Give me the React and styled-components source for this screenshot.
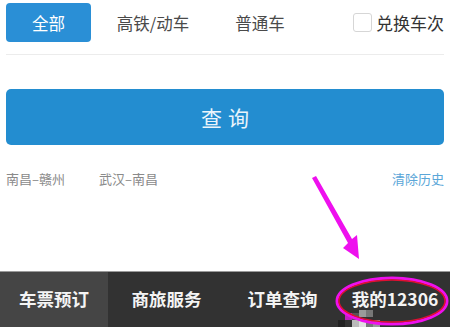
import React, { useState } from "react";
import styled, { createGlobalStyle } from "styled-components";

const GlobalStyle = createGlobalStyle`
  html, body {
    margin: 0;
    padding: 0;
    background: #ffffff;
  }
  body {
    font-family: "Noto Sans CJK SC", "Liberation Sans", sans-serif;
  }
`;

const Page = styled.div`
  position: relative;
  width: 450px;
  height: 327px;
  overflow: hidden;
  display: flex;
  flex-direction: column;
  background: #fff;
`;

const FilterBar = styled.div`
  display: flex;
  align-items: center;
  height: 39px;
  margin: 3px 6px 0;
  padding-bottom: 12px;
  border-bottom: 1px solid #ececec;
`;

const Chip = styled.div`
  display: flex;
  align-items: center;
  justify-content: center;
  width: ${(p) => p.$w}px;
  height: 39px;
  border-radius: 4px;
  font-size: 16.5px;
  background: ${(p) => (p.$active ? "#2a8fd6" : "transparent")};
  color: ${(p) => (p.$active ? "#ffffff" : "#4a4a4a")};
`;

const Exchange = styled.label`
  margin-left: auto;
  display: flex;
  align-items: center;
  gap: 4px;
  font-size: 17px;
  color: #333;
`;

const Box = styled.span`
  width: 17px;
  height: 17px;
  border: 1px solid #d6d6d6;
  border-radius: 3px;
  background: #fff;
`;

const QueryButton = styled.button`
  margin: 34px 6px 0;
  height: 56px;
  border: none;
  border-radius: 5px;
  background: #238dd0;
  color: #eaf4fb;
  font-family: "Noto Sans CJK SC", sans-serif;
  font-size: 21px;
  letter-spacing: 6px;
  text-indent: 6px;
`;

const History = styled.div`
  display: flex;
  align-items: center;
  margin: 24px 6px 0;
  font-size: 13px;
  color: #8a8a8a;
  gap: 34px;
`;

const Clear = styled.span`
  margin-left: auto;
  color: #5aa6d8;
`;

const Spacer = styled.div`
  flex: 1;
`;

const NavBar = styled.nav`
  display: grid;
  grid-template-columns: 108px 117px 115px 1fr;
  height: 55px;
  border-top: 1px solid #9a9a9a;
  background: #323232;
`;

const Tab = styled.div`
  display: flex;
  align-items: center;
  justify-content: center;
  background: ${(p) => (p.$active ? "#454545" : "transparent")};
  color: #f4f4f4;
  font-size: 17.5px;
  font-weight: 700;
  padding-bottom: 2px;
`;

const Overlay = styled.svg`
  position: absolute;
  left: 0;
  top: 0;
  pointer-events: none;
`;

const Mosaic = styled.div`
  position: absolute;
  left: ${(p) => p.$x}px;
  top: ${(p) => p.$y}px;
  width: 7px;
  height: 7px;
  background: ${(p) => p.$c};
`;

const mosaic = [
  [345, 313, "#c020c0"],
  [352, 313, "#555"],
  [359, 310, "#9a9a9a"],
  [366, 310, "#777"],
  [352, 320, "#bbb"],
  [359, 320, "#e0e0e0"],
  [366, 320, "#777"],
  [373, 320, "#999"],
  [338, 320, "#222"],
];

export default function App() {
  const [tab, setTab] = useState(0);
  const tabs = ["车票预订", "商旅服务", "订单查询", "我的12306"];

  return (
    <Page>
      <GlobalStyle />
      <FilterBar>
        <Chip $active $w={85}>全部</Chip>
        <Chip $w={124}>高铁/动车</Chip>
        <Chip $w={90}>普通车</Chip>
        <Exchange>
          <Box />
          兑换车次
        </Exchange>
      </FilterBar>
      <QueryButton>查询</QueryButton>
      <History>
        <span>南昌–赣州</span>
        <span>武汉–南昌</span>
        <Clear>清除历史</Clear>
      </History>
      <Spacer />
      <NavBar>
        {tabs.map((t, i) => (
          <Tab key={t} $active={i === tab} onClick={() => setTab(i)}>
            {t}
          </Tab>
        ))}
      </NavBar>
      {mosaic.map(([x, y, c], i) => (
        <Mosaic key={i} $x={x} $y={y} $c={c} />
      ))}
      <Overlay width="450" height="327" viewBox="0 0 450 327">
        <polygon
          points="312,178 316,176 352,239 357,235 359,259 343,248 348,243"
          fill="#ee10ee"
        />
        <ellipse cx="392" cy="301" rx="55" ry="23" fill="none" stroke="#ee10ee" strokeWidth="3" />
        <ellipse cx="392" cy="301" rx="53" ry="21" fill="none" stroke="#e01030" strokeWidth="1.5" />
      </Overlay>
    </Page>
  );
}
